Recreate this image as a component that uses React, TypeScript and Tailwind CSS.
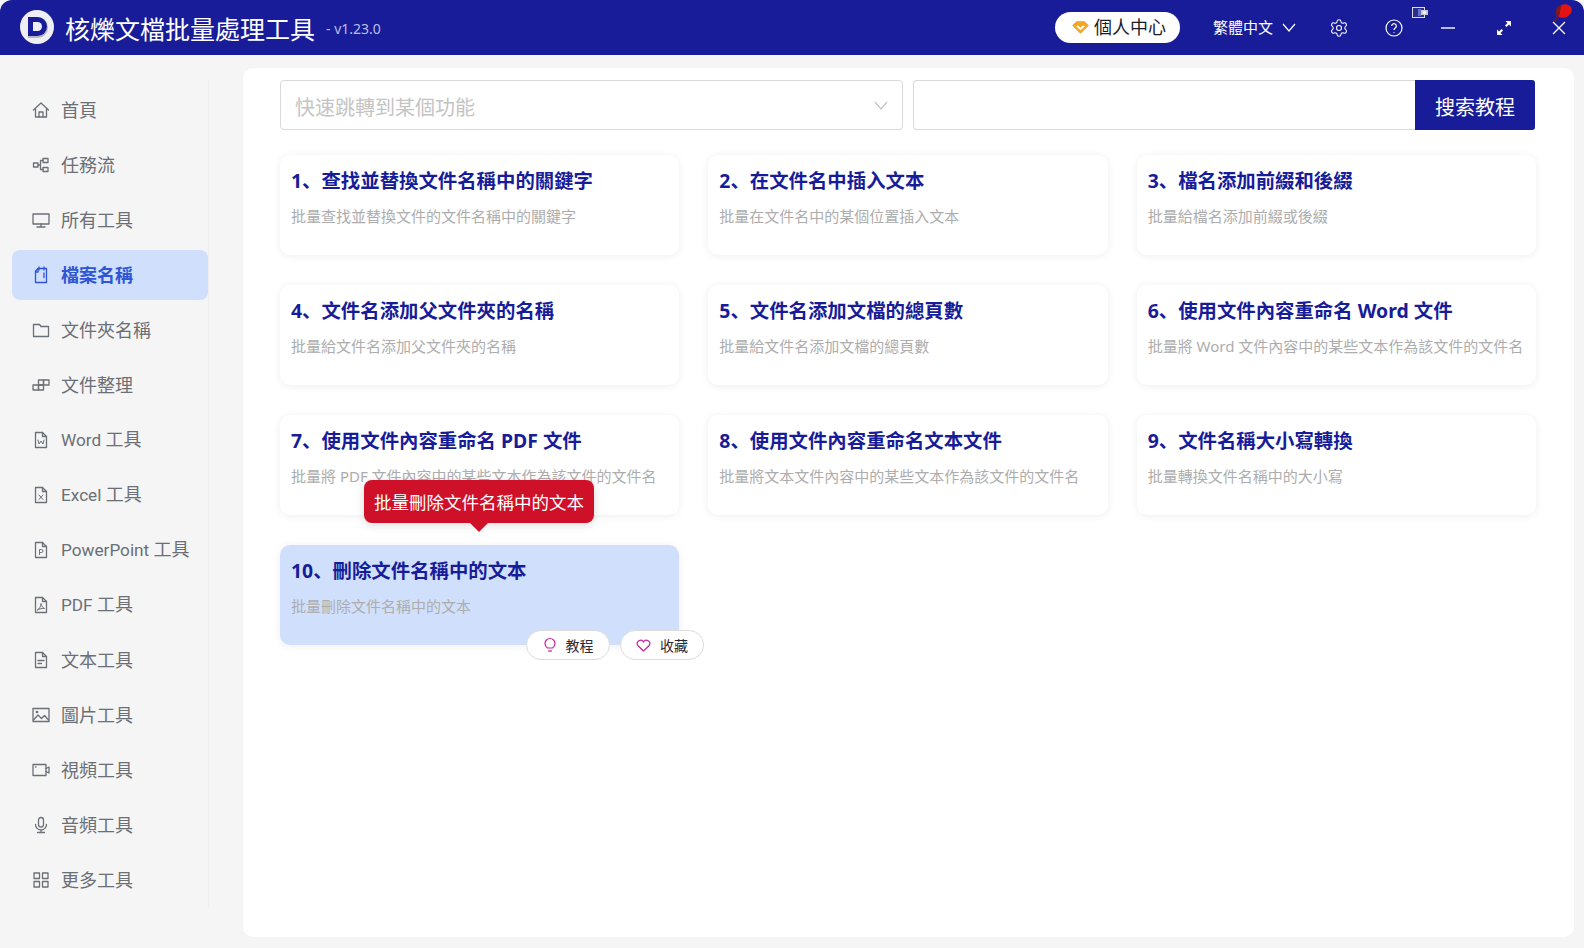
import React from "react";
import { Settings } from "lucide-react";

const FONT = "font-['Noto_Sans','Noto_Sans_CJK_SC',sans-serif]";

const sw = { fill: "none", stroke: "currentColor", strokeWidth: 1.3, strokeLinecap: "round" as const, strokeLinejoin: "round" as const };

function Ic({ children, active }: { children: React.ReactNode; active?: boolean }) {
  return (
    <svg width="18" height="18" viewBox="0 0 18 18" className={active ? "text-[#2f55d4] shrink-0" : "text-[#6b6f76] shrink-0"} {...sw}>
      {children}
    </svg>
  );
}

const doc = "M3.5 1.5h7l4 4v11h-11z";
const fold = "M10.5 1.5v4h4";

const menu: { label: string; latin?: string; icon: React.ReactNode }[] = [
  { label: "首頁", icon: <><path d="M1.5 9 9 2l7.5 7" /><path d="M3.5 8v8h11V8" /><path d="M7 16v-5h4v5" /></> },
  { label: "任務流", icon: <><rect x="1.5" y="7" width="4.5" height="4" /><rect x="11" y="2.5" width="5" height="4" /><rect x="11" y="11.5" width="5" height="4" /><path d="M6 9h2.5M8.5 4.5V13.5M8.5 4.5H11M8.5 13.5H11" /></> },
  { label: "所有工具", icon: <><rect x="1" y="3" width="16" height="10" /><path d="M9 13v3M5 16h8" /></> },
  { label: "檔案名稱", icon: <><path d="M6 2.500h8.500v14h-11V5z" /><path d="M7 1v3M12 1v3M12 7v4.500" /><path d="M6 2.500V6H3.500" /></> },
  { label: "文件夾名稱", icon: <path d="M1.5 3.5h6l1.5 2h7.5v10h-15z" /> },
  { label: "文件整理", icon: <><rect x="1" y="9" width="5.5" height="5" /><rect x="6.5" y="9" width="5" height="5" /><rect x="6.5" y="4" width="5" height="5" /><rect x="11.5" y="4" width="5.5" height="5" /></> },
  { latin: "Word ", label: "工具", icon: <><path d={doc} /><path d={fold} /><path d="m6 9 1 4 2-3 2 3 1-4" strokeWidth="1" /></> },
  { latin: "Excel ", label: "工具", icon: <><path d={doc} /><path d={fold} /><path d="m7 9 4 4.5M11 9l-4 4.5" strokeWidth="1" /></> },
  { latin: "PowerPoint ", label: "工具", icon: <><path d={doc} /><path d={fold} /><path d="M7.5 13.5V8.5h2a1.5 1.5 0 0 1 0 3h-2" strokeWidth="1" /></> },
  { latin: "PDF ", label: "工具", icon: <><path d={doc} /><path d={fold} /><path d="M5.5 14c2-1 3.500-4 3.500-6.500.5 2.500 2 4.500 3.500 5-2-.3-4.500 0-7 1.500z" strokeWidth="1" /></> },
  { label: "文本工具", icon: <><path d={doc} /><path d={fold} /><path d="M6 9.500h6M6 12.500h3.500" /></> },
  { label: "圖片工具", icon: <><rect x="1" y="2.500" width="16" height="13" /><circle cx="5" cy="6" r=".7" /><path d="m1.500 14 4.500-5 3.500 3.500 3-3 4 4.500" /></> },
  { label: "視頻工具", icon: <><rect x="1" y="3.500" width="13" height="11" /><path d="M14 7.500l3-1.500v6l-3-1.500" /><path d="M3.500 6h.4" /></> },
  { label: "音頻工具", icon: <><rect x="6.500" y="1.500" width="5" height="9.500" rx="2.500" /><path d="M3.500 8.500a5.500 5.500 0 0 0 11 0M9 14v2.500M5.500 16.500h7" /></> },
  { label: "更多工具", icon: <><rect x="2" y="2" width="5.500" height="5.500" /><rect x="10.500" y="2" width="5.500" height="5.500" /><rect x="2" y="10.500" width="5.500" height="5.500" /><rect x="10.500" y="10.500" width="5.500" height="5.500" /></> },
];

const cards = [
  ["1、查找並替換文件名稱中的關鍵字", "批量查找並替換文件的文件名稱中的關鍵字"],
  ["2、在文件名中插入文本", "批量在文件名中的某個位置插入文本"],
  ["3、檔名添加前綴和後綴", "批量給檔名添加前綴或後綴"],
  ["4、文件名添加父文件夾的名稱", "批量給文件名添加父文件夾的名稱"],
  ["5、文件名添加文檔的總頁數", "批量給文件名添加文檔的總頁數"],
  ["6、使用文件內容重命名 Word 文件", "批量將 Word 文件內容中的某些文本作為該文件的文件名"],
  ["7、使用文件內容重命名 PDF 文件", "批量將 PDF 文件內容中的某些文本作為該文件的文件名"],
  ["8、使用文件內容重命名文本文件", "批量將文本文件內容中的某些文本作為該文件的文件名"],
  ["9、文件名稱大小寫轉換", "批量轉換文件名稱中的大小寫"],
  ["10、刪除文件名稱中的文本", "批量刪除文件名稱中的文本"],
];

function Logo() {
  return (
    <svg width="34" height="34" viewBox="0 0 34 34" className="shrink-0 mb-[2px]">
      <circle cx="17" cy="17" r="17" fill="#efeff3" />
      <path d="M8 7h9.500a10.500 10.500 0 0 1 0 21H8z" fill="#b4b4c2" />
      <path d="M8 7h9.500a9.500 9.500 0 0 1 0 19H8z" fill="#181c98" />
      <path d="M13 12h4.500a4.500 4.500 0 0 1 0 9H13z" fill="#efeff3" />
    </svg>
  );
}

export default function App() {
  return (
    <div className={`${FONT} w-[1584px] h-[948px] flex flex-col bg-[#f5f5f5] overflow-hidden`}>
      <header className="h-[55px] bg-[#181c98] rounded-t-[12px] flex items-center pl-[20px] shrink-0 text-white">
        <Logo />
        <span className="ml-[11px] pt-[3px] text-[25px] leading-none whitespace-nowrap">核爍文檔批量處理工具</span>
        <span className="ml-[11px] pt-[2px] text-[14px] text-[#b9bfe8] whitespace-nowrap">- v1.23.0</span>
        <div className="ml-auto flex items-center">
          <div className="flex items-center w-[125px] h-[31px] pl-[17px] rounded-full bg-white text-[#1c1c28] text-[18px] gap-[5px]">
            <svg width="17" height="13" viewBox="0 0 17 13"><path d="M4.500 .7h8l3.800 3.800L8.500 12.300.7 4.500z" fill="#f5a623" stroke="#f5a623" strokeLinejoin="round" /><path d="M5 4.800 8.500 8 12 4.800" stroke="#fff" strokeWidth="1.800" fill="none" /></svg>
            <span>個人中心</span>
          </div>
          <span className="ml-[33px] text-[15px] whitespace-nowrap">繁體中文</span>
          <svg width="14" height="9" viewBox="0 0 14 9" className="ml-[9px]" fill="none" stroke="#fff" strokeWidth="1.200"><path d="m1 1 6 7 6-7" /></svg>
          <Settings size={20} strokeWidth={1.3} className="ml-[33px]" />
          <div className="relative ml-[36px] w-[18px] h-[18px]">
            <svg width="18" height="18" viewBox="0 0 18 18" fill="none" stroke="#fff" strokeWidth="1.200"><circle cx="9" cy="9" r="8" /><path d="M6.700 7a2.300 2.300 0 1 1 3.500 2c-.8.500-1.200 1-1.200 2" /><path d="M9 13v.8" /></svg>
            <svg width="16" height="11" viewBox="0 0 16 11" className="absolute left-[27px] top-[-12px]"><rect x=".5" y=".5" width="12" height="10" fill="#2a3090" stroke="#dcdce4" /><rect x="6" y="2" width="3" height="7" fill="#6a70c0" /><rect x="9" y="3" width="7" height="5" fill="#c8c8d0" /><rect x="11" y="4.500" width="3" height="2" fill="#fff" /></svg>
          </div>
          <svg width="14" height="2" viewBox="0 0 14 2" className="ml-[38px]"><path d="M0 1h14" stroke="#fff" strokeWidth="1.400" /></svg>
          <svg width="14" height="14" viewBox="0 0 14 14" className="ml-[42px]" fill="#fff"><path d="M14 0v5.500L12 3.500 9.500 6 8 4.500 10.500 2 8.500 0zM0 14V8.500L2 10.500 4.500 8 6 9.500 3.500 12 5.500 14z" /></svg>
          <div className="relative ml-[41px] mr-[18px] w-[14px] h-[14px]">
            <svg width="14" height="14" viewBox="0 0 14 14" stroke="#fff" strokeWidth="1.300"><path d="m1 1 12 12M13 1 1 13" /></svg>
            <svg width="20" height="20" viewBox="0 0 20 20" className="absolute left-[1px] top-[-18px]">
              <path d="M1 18.500 4.500 14" stroke="#7a1a1a" strokeWidth="1.400" fill="none" />
              <ellipse cx="11" cy="8" rx="8" ry="6.500" transform="rotate(-25 11 8)" fill="#e51414" />
              <path d="M3 9C2.500 6 5 2.500 9 1.500L7.500 6 6.500 12 4 14z" fill="#7a1a1a" />
            </svg>
          </div>
        </div>
      </header>
      <div className="flex-1 flex min-h-0">
        <aside className="w-[209px] shrink-0 mt-[25px] mb-[40px] pt-[5px] border-r border-[#efefef] pl-[12px] font-['Roboto','Noto_Sans_CJK_SC',sans-serif]">
          <nav className="flex flex-col">
            {menu.map((m, i) => {
              const active = m.label === "檔案名稱";
              return (
                <div key={i} className={`h-[50px] mb-[5px] w-[196px] rounded-[8px] flex items-center pl-[20px] gap-[11px] text-[18px] whitespace-nowrap ${active ? "bg-[#d0e0fc] text-[#2f55d4] font-bold" : "text-[#6b6f76]"}`}>
                  <Ic active={active}>{m.icon}</Ic>
                  <span>
                    {m.latin && <span className="text-[17.2px]">{m.latin}</span>}
                    {m.label}
                  </span>
                </div>
              );
            })}
          </nav>
        </aside>
        <main className="flex-1 mt-[13px] mb-[11px] ml-[34px] mr-[10px] bg-white rounded-[10px] pl-[37px] pr-[38px] pt-[12px] min-w-0">
          <div className="flex h-[50px] gap-[10px] pr-px">
            <div className="w-[623px] border border-[#d9d9d9] rounded-[4px] flex items-center justify-between pl-[14px] pr-[14px] text-[20px] text-[#c4c4c4]">
              <span className="pt-[5px]">快速跳轉到某個功能</span>
              <svg width="14" height="9" viewBox="0 0 14 9" fill="none" stroke="#c4c4c4" strokeWidth="1.200"><path d="m1 1 6 7 6-7" /></svg>
            </div>
            <div className="flex-1 flex border-y border-l border-[#d9d9d9] rounded-[4px]">
              <div className="flex-1" />
              <button className="w-[120px] -my-px pt-[5px] bg-[#181c98] text-white text-[20px] rounded-r-[3px]">搜索教程</button>
            </div>
          </div>
          <div className="grid grid-cols-3 gap-x-[29px] gap-y-[30px] mt-[25px]">
            {cards.map((c, i) => {
              const hot = i === 9;
              return (
                <div key={i} className={`relative h-[100px] rounded-[10px] pl-[11px] pr-[6px] pt-[12px] shadow-[0_1px_8px_rgba(0,0,0,0.07)] ${hot ? "bg-[#d0e0fc]" : "bg-white"}`}>
                  <div className="text-[19.4px] leading-[28px] font-bold text-[#181c98] whitespace-nowrap">{c[0]}</div>
                  <div className="mt-[9px] text-[15px] leading-[24px] text-[#adadad] whitespace-nowrap">{c[1]}</div>
                  {hot && (
                    <>
                      <div className="absolute left-[84px] top-[-65px] h-[43px] w-[230px] pt-[2px] rounded-[8px] bg-[#cf1029] text-white text-[17.5px] flex items-center justify-center whitespace-nowrap shadow-[0_2px_8px_rgba(0,0,0,0.15)]">
                        批量刪除文件名稱中的文本
                        <div className="absolute left-[106px] bottom-[-9px] w-0 h-0 border-x-[9px] border-x-transparent border-t-[9px] border-t-[#cf1029]" />
                      </div>
                      <div className="absolute left-[246px] top-[85px] w-[84px] h-[30px] rounded-full bg-white border border-[#dcdcdc] flex items-center justify-center gap-[9px] text-[14px] text-[#2a2a36]">
                        <svg width="14" height="16" viewBox="0 0 14 16" fill="none" stroke="#c9229a" strokeWidth="1.200"><path d="M4.500 11C3 10 2 8.500 2 6.500a5 5 0 0 1 10 0c0 2-1 3.500-2.500 4.500z" /><path d="M5 14h4" /></svg>
                        <span>教程</span>
                      </div>
                      <div className="absolute left-[340px] top-[85px] w-[84px] h-[30px] rounded-full bg-white border border-[#dcdcdc] flex items-center justify-center gap-[9px] text-[14px] text-[#2a2a36]">
                        <svg width="15" height="13" viewBox="0 0 15 13" fill="none" stroke="#c9229a" strokeWidth="1.200"><path d="M7.500 12 1.800 6.500a3.300 3.300 0 0 1 5.700-3.700 3.300 3.300 0 0 1 5.700 3.700z" /></svg>
                        <span>收藏</span>
                      </div>
                    </>
                  )}
                </div>
              );
            })}
          </div>
        </main>
      </div>
    </div>
  );
}
